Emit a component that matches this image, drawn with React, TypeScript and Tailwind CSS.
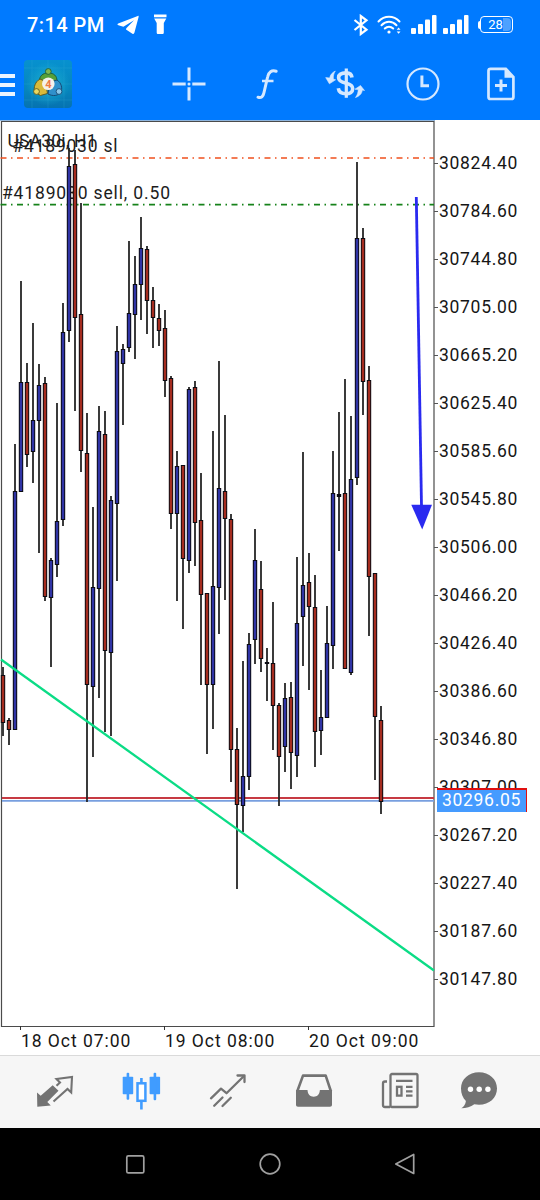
import type { ReactNode } from 'react';

type Candle = {
  high: number;
  top: number;
  bottom: number;
  low: number;
  up: boolean;
};

const c = (high: number, top: number, bottom: number, low: number, up: boolean): Candle => ({
  high,
  top,
  bottom,
  low,
  up,
});

const CANDLE_STEP = 6;

// Chart space coordinates, one entry per hourly bar
const candles: Candle[] = [
  c(547, 555, 603, 616, false),
  c(598, 600, 610, 625, false),
  c(324, 371, 610, 610, true),
  c(161, 262, 372, 372, true),
  c(243, 262, 335, 347, false),
  c(203, 300, 332, 363, true),
  c(244, 265, 301, 433, true),
  c(257, 263, 477, 481, false),
  c(438, 440, 478, 547, true),
  c(283, 401, 445, 457, true),
  c(183, 212, 400, 406, true),
  c(28, 46, 211, 222, true),
  c(30, 44, 198, 291, false),
  c(83, 194, 331, 352, false),
  c(293, 333, 565, 682, false),
  c(387, 467, 567, 637, true),
  c(286, 311, 469, 578, true),
  c(291, 314, 531, 612, false),
  c(376, 380, 533, 616, true),
  c(206, 231, 384, 461, true),
  c(224, 229, 244, 305, true),
  c(121, 193, 228, 232, true),
  c(136, 164, 195, 239, true),
  c(97, 128, 165, 200, true),
  c(126, 129, 181, 214, false),
  c(167, 180, 198, 228, false),
  c(184, 198, 211, 226, false),
  c(190, 208, 261, 277, false),
  c(256, 258, 394, 409, false),
  c(331, 346, 394, 481, true),
  c(345, 345, 439, 509, false),
  c(267, 269, 441, 453, true),
  c(261, 267, 403, 446, false),
  c(353, 400, 475, 565, false),
  c(473, 473, 565, 634, false),
  c(311, 466, 565, 609, true),
  c(241, 368, 468, 514, true),
  c(295, 371, 399, 480, false),
  c(394, 399, 630, 662, false),
  c(608, 629, 685, 769, false),
  c(541, 656, 686, 712, true),
  c(513, 524, 657, 670, true),
  c(409, 440, 520, 544, true),
  c(441, 469, 539, 552, false),
  c(528, 542, 544, 581, false),
  c(482, 543, 586, 630, false),
  c(583, 585, 637, 686, false),
  c(563, 578, 627, 652, true),
  c(562, 577, 633, 669, false),
  c(437, 503, 636, 657, true),
  c(332, 465, 497, 546, true),
  c(433, 462, 487, 570, false),
  c(455, 487, 612, 647, false),
  c(550, 597, 611, 635, true),
  c(486, 523, 598, 598, true),
  c(331, 373, 526, 549, true),
  c(292, 374, 377, 431, true),
  c(259, 373, 549, 549, false),
  c(296, 359, 553, 555, true),
  c(42, 118, 358, 365, true),
  c(108, 118, 262, 295, false),
  c(246, 260, 457, 516, false),
  c(453, 453, 597, 660, false),
  c(586, 600, 682, 694, false),
];

const prices = [
  '30824.40', '30784.60', '30744.80', '30705.00', '30665.20', '30625.40',
  '30585.60', '30545.80', '30506.00', '30466.20', '30426.40', '30386.60',
  '30346.80', '30307.00', '30267.20', '30227.40', '30187.60', '30147.80',
];

const times = ['18 Oct 07:00', '19 Oct 08:00', '20 Oct 09:00'];

function Signal({ className }: { className: string }) {
  return (
    <svg className={className} width="26" height="20" viewBox="0 0 26 20" fill="#fff">
      <rect x="0" y="13" width="5" height="6" rx="1" />
      <rect x="7" y="9" width="5" height="10" rx="1" />
      <rect x="14" y="4.5" width="5" height="14.5" rx="1" />
      <rect x="21" y="0" width="4.5" height="19" rx="1" />
    </svg>
  );
}

function StatusBar() {
  return (
    <div className="flex h-[49px] items-center pl-[27px] pr-[27px] text-white">
      <span className="text-[20px] font-medium leading-none tracking-[0.45px]">7:14 PM</span>

      {/* Telegram */}
      <svg className="ml-[12px]" width="22" height="20" viewBox="0 0 22 20" fill="#fff">
        <path d="M20.8.9 1.2 8.6c-1.2.5-1 1.2.2 1.6l5 1.5L17 5.3 9.300 13.200l-.3 1.300 6.400 4.200c1 .600 1.700.2 2-.9L21.600 2c.2-1-.1-1.300-.8-1.100z" />
      </svg>

      {/* Flashlight */}
      <svg className="ml-[15px]" width="13" height="21" viewBox="0 0 13 21" fill="#fff">
        <path d="M0 .5h12.500v2.800H0zM.2 4.500h12.100L9.800 9v9.500c0 1-.6 1.600-1.500 1.600H4.200c-.9 0-1.500-.6-1.500-1.600V9z" />
      </svg>

      <div className="ml-auto flex items-center">
        {/* Bluetooth */}
        <svg width="16" height="22" viewBox="0 0 16 22" fill="none" stroke="#fff" strokeWidth="2.200">
          <path d="m1.500 6 12 9.700L7.800 20V2l5.700 4.300-12 9.700" />
        </svg>

        {/* Wi-Fi */}
        <svg className="ml-[8px]" width="25" height="20" viewBox="0 0 25 20" fill="none" stroke="#fff" strokeWidth="2" strokeLinecap="round">
          <path d="M1.500 6.500c6-6.300 15-6.300 21 0M4.500 10.200c4.500-4.600 10.500-4.600 15 0M7.800 13.500c2.500-2.500 5.900-2.500 8.400 0" />
          <circle cx="12" cy="17" r="1.600" fill="#fff" stroke="none" />
          <path d="m19.700 14.700 1.900-2.200 1.900 2.200zM19.700 16.500l1.900 2.200 1.900-2.200z" fill="#fff" stroke="none" />
        </svg>

        <Signal className="ml-[9px]" />
        <Signal className="ml-[6px]" />

        {/* Battery */}
        <div className="ml-[9px] flex items-center">
          <div className="h-[8px] w-[2px] rounded-l bg-white" />
          <div className="relative flex h-[17px] w-[33px] items-center justify-center rounded-[4px] border-[1.500px] border-white text-[13px] leading-none">
            <div className="absolute inset-y-px right-px w-[8px] rounded-r-sm bg-[#4da1ff]" />
            <span className="relative -left-px">28</span>
          </div>
        </div>
      </div>
    </div>
  );
}

function AppLogo() {
  return (
    <svg className="ml-[9px]" width="48" height="48" viewBox="0 0 48 48">
      <defs>
        <linearGradient id="logo-bg" x1="0" y1="0" x2="0" y2="1">
          <stop offset="0" stopColor="#0791cf" />
          <stop offset="0.600" stopColor="#0686bd" />
          <stop offset="1" stopColor="#0672b0" />
        </linearGradient>
        <radialGradient id="logo-glow">
          <stop offset="0" stopColor="#25c2dc" stopOpacity="0.700" />
          <stop offset="1" stopColor="#25c2dc" stopOpacity="0" />
        </radialGradient>
      </defs>
      <rect width="48" height="48" rx="4" fill="url(#logo-bg)" />
      <circle cx="24" cy="24" r="22" fill="url(#logo-glow)" />
      <path d="M8 0v48M24 0v48M40 0v48M0 8h48M0 24h48M0 40h48" stroke="#3db5df" strokeWidth="0.500" opacity="0.400" />
      {/* Green figure */}
      <path d="M15.500 21c0-5 3-8 8.800-8s8.700 3 8.700 8l-4 2-9 1z" fill="#55a038" stroke="#1d5f3a" />
      <circle cx="24.300" cy="11.500" r="2.900" fill="#7fb850" stroke="#1d5f3a" strokeWidth="0.900" />
      {/* Yellow figure */}
      <path d="M16 19c-5 3-6.500 8-5.500 13l6 3.500 7-2-2-12z" fill="#d8ba3a" stroke="#5d5a22" />
      <circle cx="12.500" cy="31.500" r="2.900" fill="#ecd860" stroke="#5d5a22" strokeWidth="0.900" />
      {/* Blue figure */}
      <path d="M33 20c4.500 3 5.500 8 4 12-3 4-8 4.500-13 2l2-12z" fill="#3090cb" stroke="#154a75" />
      <circle cx="35" cy="31.500" r="2.900" fill="#8cc8ea" stroke="#154a75" strokeWidth="0.900" />
      <circle cx="24.300" cy="23.800" r="6.300" fill="#f5f1ea" />
      <text x="24.300" y="27.700" textAnchor="middle" fontSize="11" fontWeight="700" fill="#ee7a44">4</text>
    </svg>
  );
}

function ToolButton({ children }: { children: ReactNode }) {
  return (
    <button className="flex w-[78px] items-center justify-center">
      <svg width="40" height="40" viewBox="0 0 40 40" fill="none" stroke="#d5e8ff" strokeWidth="2.500">
        {children}
      </svg>
    </button>
  );
}

function Toolbar() {
  return (
    <div className="flex h-[70px] items-center">
      <div className="flex w-[15px] flex-col gap-[5px] pt-[2px]">
        <div className="h-[4px] bg-[#eaf4ff]" />
        <div className="h-[4px] bg-[#eaf4ff]" />
        <div className="h-[4px] bg-[#eaf4ff]" />
      </div>
      <AppLogo />

      <div className="ml-[78px] flex">
        {/* Crosshair */}
        <ToolButton>
          <path d="M20 3.500v13.200M20 23.300v13.200M3.500 20h13.200M23.300 20h13.200" strokeWidth="3" />
          <circle cx="20" cy="20" r="1.500" fill="#d5e8ff" stroke="none" />
        </ToolButton>

        {/* Indicators */}
        <ToolButton>
          <path d="M11 33.200c3.200 1.300 5.200-.7 6-4.700l3.600-15.500c1-5 4-7.200 8.600-5.800" strokeWidth="3" strokeLinecap="round" />
          <path d="M15 17h11.500" />
        </ToolButton>

        {/* Trade */}
        <ToolButton>
          <path d="M21.300 4.500v29.300" strokeWidth="3.200" />
          <path d="M27 13.500c-.4-3-2.600-4.600-5.700-4.600-4.400 0-7.700 1.600-7.700 4.800 0 3.200 3.300 4.600 7.700 5.600 4 1 6.400 2.600 6.400 5.500 0 3.200-2.800 5-6.400 5-4 0-7.500-1.800-8-5.500" strokeWidth="3.600" />
          <path d="M10.300 7C7.500 8.300 5 11 4.700 14L.7 13.600l3.700 6.200 6.200-4-2.300-.8c-.1-3 .4-5.600 2-8z" fill="#d5e8ff" stroke="#d5e8ff" strokeWidth="0.600" />
          <path d="M30.500 33.500c4.500-1.500 6.500-4.300 6.800-7.500l2.200.5-4-5-5.500 3.700 3.200.4c-.1 3-.8 5.500-2.700 7.900z" fill="#d5e8ff" stroke="#d5e8ff" strokeWidth="0.600" />
        </ToolButton>

        {/* Timeframes */}
        <ToolButton>
          <circle cx="20" cy="20" r="15.500" strokeWidth="2.200" />
          <path d="M18.900 11.500v10.200H26" strokeWidth="3" />
        </ToolButton>

        {/* New order */}
        <ToolButton>
          <path d="M9.500 4.800h15.300l7.600 8.200v20c0 1.300-.7 2-2 2H9.500c-1.300 0-2-.7-2-2V6.800c0-1.300.7-2 2-2z" strokeWidth="2.700" />
          <path d="M23.500 4v9.700h9.500L25 4z" fill="#d5e8ff" stroke="none" />
          <path d="M20 15.500v12M14 21.500h12" strokeWidth="3" />
        </ToolButton>
      </div>
    </div>
  );
}

function CandleShape({ candle, x }: { candle: Candle; x: number }) {
  const { high, top, bottom, low, up } = candle;
  return (
    <g>
      <path d={`M${x} ${high}V${low}`} stroke="#252525" strokeWidth="1.800" />
      <rect x={x - 2.2} y={top} width="4.400" height={bottom - top} fill="#0b0b12" />
      {bottom - top > 3 && (
        <rect x={x - 1.2} y={top + 1} width="2.400" height={bottom - top - 2} fill={up ? '#3034a5' : '#a52d20'} />
      )}
    </g>
  );
}

function PriceChart() {
  return (
    <svg className="block shrink-0" width="438" height="911" viewBox="0 0 438 911">
      {/* Frame and axis ticks */}
      <path d="M0 .5h435" stroke="#8db5df" />
      <path d="M1.500 1.500H434V906.500H1.500z" fill="#fff" stroke="#4b4b4b" strokeWidth="1.200" />
      {prices.map((price, i) => (
        <path key={price} d={`M434 ${43.5 + i * 48}h4`} stroke="#555" />
      ))}
      {times.map((time, i) => (
        <path key={time} d={`M${20.5 + i * 144} 906v4`} stroke="#333" />
      ))}

      {/* Order levels */}
      <path d="M.5 38H434" stroke="#f0501e" strokeWidth="1.700" strokeDasharray="6 4.500 1.500 4.500" />
      <path d="M.5 84.600H434" stroke="#16821a" strokeWidth="1.700" strokeDasharray="6 4.500 1.500 4.500" />
      <g fill="#1c1c1c" fontSize="17.500">
        <text x="7.500" y="27" textLength="89">USA30i, H1</text>
        <text x="12.500" y="32" textLength="105">#4189030 sl</text>
        <text x="2" y="78.500" textLength="168">#4189030 sell, 0.50</text>
      </g>

      {/* Ask and bid */}
      <path d="M2 678h432" stroke="#c73a43" strokeWidth="2" />
      <path d="M2 680.800h432" stroke="#789fdf" strokeWidth="1.800" />

      {candles.map((candle, i) => (
        <CandleShape key={i} candle={candle} x={3 + i * CANDLE_STEP} />
      ))}

      {/* Trend line and arrow */}
      <path d="M1 539.500 434 850.500" stroke="#0bdc86" strokeWidth="2.300" />
      <path d="M416.300 77 421.500 386" stroke="#2a2af0" strokeWidth="2.800" />
      <path d="M411.300 384.800h20.700L422.200 409.500z" fill="#2a2af0" />
    </svg>
  );
}

function PriceAxis() {
  return (
    <div className="relative flex-1 pt-5 text-[17.5px] tracking-[0.7px] text-[#161616]">
      {prices.map((price) => (
        <div key={price} className="flex h-12 items-center pl-px leading-none">
          {price}
        </div>
      ))}
      {/* Current price tag sits over the scale */}
      <div className="absolute -left-[1px] top-[668px] h-[24px] w-[90px] border-r border-t-2 border-[#e01010] bg-[#459bff]">
        <div className="flex h-[22px] items-center justify-center leading-none text-white">30296.05</div>
      </div>
    </div>
  );
}

function TimeAxis() {
  return (
    <div className="flex h-6 pl-[21px] text-[17.5px] leading-[20px] tracking-[0.95px] text-[#161616]">
      {times.map((time) => (
        <span key={time} className="w-36 whitespace-nowrap">
          {time}
        </span>
      ))}
    </div>
  );
}

function TabButton({ className, children }: { className: string; children: ReactNode }) {
  return (
    <button className={`flex items-center justify-center ${className}`}>
      <svg width="40" height="40" viewBox="0 0 40 40" fill="none" stroke="currentColor" strokeWidth="2.300">
        {children}
      </svg>
    </button>
  );
}

function TabBar() {
  return (
    <div className="flex h-[73px] border-t border-[#dadada] bg-[#f6f6f6] pb-[2px] pl-3 text-[#737373]">
      {/* Quotes */}
      <TabButton className="w-[86px]">
        <path d="m2 21.500 3.700 3.200 12-10.400 5.800 5.500L12.300 31l3.500 3.500L2.300 35.700z" fill="currentColor" stroke="none" />
        <path d="m21.500 14.800 3.500-3.300L21.500 8 37 6l-.8 15.500-3.700-3.500L18.500 30.500" strokeWidth="2.100" />
      </TabButton>

      {/* Charts */}
      <TabButton className="w-[86px] text-[#409cff]">
        <g fill="currentColor" stroke="none">
          <rect x="1.700" y="5.700" width="10.500" height="17.500" rx="0.800" />
          <rect x="5.600" y="1.700" width="2.600" height="27" rx="1" />
          <rect x="28.600" y="5.700" width="10.500" height="17.500" rx="0.800" />
          <rect x="32.600" y="1.700" width="2.600" height="27.500" rx="1" />
        </g>
        <rect x="16.500" y="12.300" width="7.900" height="17.500" strokeWidth="2.500" fill="#fff" />
        <path d="M20.400 7v5M20.400 30v8.500" strokeWidth="2.600" />
      </TabButton>

      {/* Trade */}
      <TabButton className="w-[86px]">
        <g strokeLinecap="round" strokeLinejoin="round">
          <path d="m4 27.300 10-9.600 5.500 4.500L37 5" />
          <path d="M30.500 4.500h7v6.500M7.200 34.700l8.300-8.200M15.500 35l8.300-8.200" />
        </g>
      </TabButton>

      {/* History */}
      <TabButton className="w-[86px]">
        <path d="M4.200 20.500 10 4.600h22.700L38 20.500" strokeWidth="2.600" strokeLinejoin="round" />
        <path d="M3 19h11.500c.3 4.500 2.500 6.700 6.200 6.700s5.800-2.200 6.200-6.700H39v14.700c0 1.300-.7 2-2 2H5c-1.300 0-2-.7-2-2z" fill="currentColor" stroke="none" />
      </TabButton>

      {/* News */}
      <TabButton className="w-[86px]">
        <rect x="11.500" y="3" width="27" height="33" rx="1.500" />
        <path d="M11 36H6c-1.300 0-2-.7-2-2V12.500c0-1.200.7-2 2-2h2" />
        <path d="M17 9.800h16.500M27 15.800h6.500M27 20.300h6.500M27 24.700h6.500" />
        <rect x="18" y="15.800" width="4.500" height="8.800" />
      </TabButton>

      {/* Messages */}
      <TabButton className="w-[74px]">
        <path d="M20 1.200c10.300 0 18 7 18 16.300s-7.700 16.300-18 16.300c-1.600 0-3.200-.2-4.700-.5-3.600 2.700-8 4-13 4 2.500-1.600 4.300-4.200 4.600-7.300C3.800 27 2 22.500 2 17.500 2 8.200 9.700 1.200 20 1.200z" fill="currentColor" stroke="none" />
        <g fill="#fff" stroke="none">
          <circle cx="11.500" cy="18.300" r="2.700" />
          <circle cx="20.200" cy="18.300" r="2.700" />
          <circle cx="28.900" cy="18.300" r="2.700" />
        </g>
      </TabButton>
    </div>
  );
}

function NavBar() {
  return (
    <div className="grid h-[72px] grid-cols-3 items-center justify-items-center bg-black px-[67px]">
      <svg width="24" height="24" viewBox="0 0 24 24" fill="none" stroke="#a0a0a0" strokeWidth="1.700">
        <rect x="3.800" y="3.900" width="17" height="17" rx="1.500" />
      </svg>
      <svg width="24" height="24" viewBox="0 0 24 24" fill="none" stroke="#a0a0a0" strokeWidth="1.700">
        <circle cx="12" cy="12" r="9.800" />
      </svg>
      <svg width="24" height="24" viewBox="0 0 24 24" fill="none" stroke="#a0a0a0" strokeWidth="1.700" strokeLinejoin="round">
        <path d="M2.800 12 20.700 2.500v19z" />
      </svg>
    </div>
  );
}

export default function App() {
  return (
    <div className="flex h-[1200px] w-[540px] flex-col overflow-hidden bg-white font-[Roboto,sans-serif]">
      <div className="h-[120px] bg-[#007aff]">
        <StatusBar />
        <Toolbar />
      </div>
      <div className="flex h-[911px]">
        <PriceChart />
        <PriceAxis />
      </div>
      <TimeAxis />
      <TabBar />
      <NavBar />
    </div>
  );
}
